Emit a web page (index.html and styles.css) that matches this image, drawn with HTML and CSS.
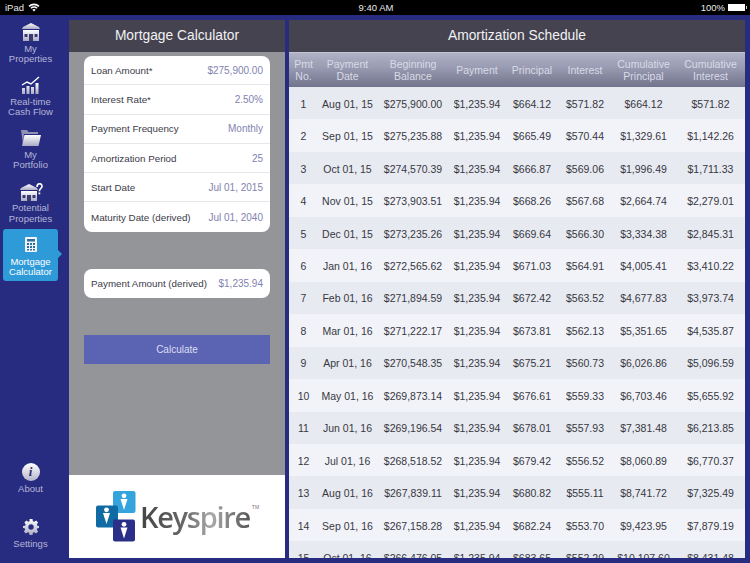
FILE: index.html
```html
<!DOCTYPE html>
<html lang="en">
<head>
    <meta charset="UTF-8">
    <meta name="viewport" content="width=device-width, initial-scale=1.0">
    <title>Mortgage Calculator</title>
    <link rel="stylesheet" href="styles.css">
</head>
<body>
    <div class="statusbar">
        <div class="status-left">
            iPad
            <svg class="wifi" viewBox="0 0 12 9" width="12" height="9">
                <path d="M6 8.6 4.3 6.7a2.5 2.5 0 0 1 3.4 0zM3.4 5.8 2.4 4.7a5.3 5.3 0 0 1 7.2 0L8.6 5.8a3.9 3.9 0 0 0-5.2 0zM1.6 3.9.5 2.8a8 8 0 0 1 11 0l-1.1 1.1a6.5 6.5 0 0 0-8.8 0z" fill="#fff"/>
            </svg>
        </div>
        <div class="status-time">9:40 AM</div>
        <div class="status-right">
            100%
            <span class="battery"></span>
        </div>
    </div>

    <div class="app">
        <!-- Menu lateral -->
        <nav class="sidebar">
            <svg class="gradients" width="0" height="0">
                <defs>
                    <linearGradient id="iconFill" x1="0" y1="0" x2="0" y2="1">
                        <stop offset="0" stop-color="#ffffff"/>
                        <stop offset="1" stop-color="#a9abc4"/>
                    </linearGradient>
                </defs>
            </svg>
            <a class="nav-item">
                <div class="icon-slot">
                    <svg viewBox="0 0 20 18" width="20" height="18">
                        <path d="M10 0 18 4 19 6H1L2 4z" fill="url(#iconFill)"/>
                        <path d="M2 7h16v11H2z" fill="url(#iconFill)"/>
                        <path d="M8 11h4v7H8zM3.5 11h3v3h-3zM13.5 11h3v3h-3z" fill="#3a3c70"/>
                    </svg>
                </div>
                <span>My<br>Properties</span>
            </a>
            <a class="nav-item">
                <div class="icon-slot">
                    <svg viewBox="0 0 20 18" width="20" height="18">
                        <path d="M1 9l5-3 4 2 8-7" fill="none" stroke="#fff" stroke-width="1.4"/>
                        <path d="M1 12h3v6H1zM5.5 10h3v8h-3zM10 11h3v7h-3zM14.5 7h3v11h-3z" fill="url(#iconFill)"/>
                    </svg>
                </div>
                <span>Real-time<br>Cash Flow</span>
            </a>
            <a class="nav-item">
                <div class="icon-slot">
                    <svg viewBox="0 0 21 16" width="21" height="16">
                        <path d="M1 0h6l1.5 2H18v2H4L3 14z" fill="#8e90b4"/>
                        <path d="M4.5 5H21l-2.5 11H2z" fill="url(#iconFill)"/>
                    </svg>
                </div>
                <span>My<br>Portfolio</span>
            </a>
            <a class="nav-item">
                <div class="icon-slot">
                    <svg viewBox="0 0 24 18" width="24" height="18">
                        <path d="M10 1 18 5 19 7H1L2 5z" fill="url(#iconFill)"/>
                        <path d="M2 8h16v10H2z" fill="url(#iconFill)"/>
                        <path d="M8 12h4v6H8zM3.5 12h3v3h-3zM13.5 12h3v3h-3z" fill="#3a3c70"/>
                        <path d="M18 4c0-4.500 5-4 5-.8 0 2.400-2.600 2.300-2.600 5" fill="none" stroke="#fff" stroke-width="1.6"/>
                        <path d="M19.5 9.5h1.800v1.800h-1.800z" fill="#fff"/>
                    </svg>
                </div>
                <span>Potential<br>Properties</span>
            </a>
            <a class="nav-item active">
                <div class="icon-slot">
                    <svg viewBox="0 0 12 15" width="12" height="15">
                        <path d="M1 0h10a1 1 0 0 1 1 1v13a1 1 0 0 1-1 1H1a1 1 0 0 1-1-1V1a1 1 0 0 1 1-1z" fill="#f2f4fa"/>
                        <path d="M2 2h8v2.500H2zM2 6h2v2H2zM5 6h2v2H5zM8 6h2v2H8zM2 9h2v2H2zM5 9h2v2H5zM8 9h2v2H8zM2 12h2v1.500H2zM5 12h2v1.500H5zM8 12h2v1.500H8z" fill="#2e6f9f"/>
                    </svg>
                </div>
                <span>Mortgage<br>Calculator</span>
            </a>
            <a class="nav-item about">
                <div class="icon-slot"><span class="info-icon">i</span></div>
                <span>About</span>
            </a>
            <a class="nav-item settings">
                <div class="icon-slot">
                    <svg viewBox="0 0 16 16" width="16" height="16">
                        <path d="M6.5 0h3l.4 2.200 1.300.6 1.900-1.300 2 2.100-1.300 1.800.6 1.300 2.100.4v1.800l-2.100.4-.6 1.300 1.300 1.800-2 2.100-1.900-1.300-1.300.6-.4 2.200h-3l-.4-2.200-1.300-.6-1.900 1.300-2-2.100 1.300-1.800-.6-1.300L0 8.900V7.100l2.100-.4.6-1.300L1.400 3.600l2-2.100 1.900 1.300 1.300-.6z" fill="url(#iconFill)"/>
                        <circle cx="8" cy="8" r="2.700" fill="#282c80"/>
                    </svg>
                </div>
                <span>Settings</span>
            </a>
        </nav>

        <!-- Calculadora -->
        <section class="calc-panel">
            <div class="panel-title">Mortgage Calculator</div>
            <div class="calc-body">
                <div class="field-group">
                    <div class="field"><span>Loan Amount*</span><span class="value">$275,900.00</span></div>
                    <div class="field"><span>Interest Rate*</span><span class="value">2.50%</span></div>
                    <div class="field"><span>Payment Frequency</span><span class="value">Monthly</span></div>
                    <div class="field"><span>Amortization Period</span><span class="value">25</span></div>
                    <div class="field"><span>Start Date</span><span class="value">Jul 01, 2015</span></div>
                    <div class="field"><span>Maturity Date (derived)</span><span class="value">Jul 01, 2040</span></div>
                </div>
                <div class="field-group">
                    <div class="field"><span>Payment Amount (derived)</span><span class="value">$1,235.94</span></div>
                </div>
                <button class="calc-btn">Calculate</button>
            </div>
            <div class="logo-box">
                <svg class="logo-mark" viewBox="0 0 41 51" width="41" height="51">
                    <rect x="17" y="0" width="22.5" height="22" rx="2" fill="#35a3dc"/>
                    <rect x="0" y="14.5" width="22" height="22" rx="2" fill="#106ba5"/>
                    <rect x="17" y="28.5" width="22" height="22" rx="2" fill="#2b2f88"/>
                    <circle cx="28" cy="4.800" r="2.400" fill="#fff"/>
                    <path d="M24.5 8h7L28 19z" fill="#fff"/>
                    <circle cx="10.5" cy="18.800" r="2.400" fill="#fff"/>
                    <path d="M7 22h7l-3.500 11z" fill="#fff"/>
                    <circle cx="28" cy="33.300" r="2.400" fill="#fff"/>
                    <path d="M24.5 36.500h7L28 47.500z" fill="#fff"/>
                </svg>
                <span class="logo-text">Keyspire</span>
                <span class="logo-tm">TM</span>
            </div>
        </section>

        <!-- Tabela de amortizacao -->
        <section class="schedule-panel">
            <div class="panel-title">Amortization Schedule</div>
            <div class="schedule-head row-cols">
                <div>Pmt<br>No.</div>
                <div>Payment<br>Date</div>
                <div>Beginning<br>Balance</div>
                <div>Payment</div>
                <div>Principal</div>
                <div>Interest</div>
                <div>Cumulative<br>Principal</div>
                <div>Cumulative<br>Interest</div>
            </div>
            <div class="schedule-rows">
                <div class="row row-cols"><div>1</div><div>Aug 01, 15</div><div>$275,900.00</div><div>$1,235.94</div><div>$664.12</div><div>$571.82</div><div>$664.12</div><div>$571.82</div></div>
                <div class="row row-cols"><div>2</div><div>Sep 01, 15</div><div>$275,235.88</div><div>$1,235.94</div><div>$665.49</div><div>$570.44</div><div>$1,329.61</div><div>$1,142.26</div></div>
                <div class="row row-cols"><div>3</div><div>Oct 01, 15</div><div>$274,570.39</div><div>$1,235.94</div><div>$666.87</div><div>$569.06</div><div>$1,996.49</div><div>$1,711.33</div></div>
                <div class="row row-cols"><div>4</div><div>Nov 01, 15</div><div>$273,903.51</div><div>$1,235.94</div><div>$668.26</div><div>$567.68</div><div>$2,664.74</div><div>$2,279.01</div></div>
                <div class="row row-cols"><div>5</div><div>Dec 01, 15</div><div>$273,235.26</div><div>$1,235.94</div><div>$669.64</div><div>$566.30</div><div>$3,334.38</div><div>$2,845.31</div></div>
                <div class="row row-cols"><div>6</div><div>Jan 01, 16</div><div>$272,565.62</div><div>$1,235.94</div><div>$671.03</div><div>$564.91</div><div>$4,005.41</div><div>$3,410.22</div></div>
                <div class="row row-cols"><div>7</div><div>Feb 01, 16</div><div>$271,894.59</div><div>$1,235.94</div><div>$672.42</div><div>$563.52</div><div>$4,677.83</div><div>$3,973.74</div></div>
                <div class="row row-cols"><div>8</div><div>Mar 01, 16</div><div>$271,222.17</div><div>$1,235.94</div><div>$673.81</div><div>$562.13</div><div>$5,351.65</div><div>$4,535.87</div></div>
                <div class="row row-cols"><div>9</div><div>Apr 01, 16</div><div>$270,548.35</div><div>$1,235.94</div><div>$675.21</div><div>$560.73</div><div>$6,026.86</div><div>$5,096.59</div></div>
                <div class="row row-cols"><div>10</div><div>May 01, 16</div><div>$269,873.14</div><div>$1,235.94</div><div>$676.61</div><div>$559.33</div><div>$6,703.46</div><div>$5,655.92</div></div>
                <div class="row row-cols"><div>11</div><div>Jun 01, 16</div><div>$269,196.54</div><div>$1,235.94</div><div>$678.01</div><div>$557.93</div><div>$7,381.48</div><div>$6,213.85</div></div>
                <div class="row row-cols"><div>12</div><div>Jul 01, 16</div><div>$268,518.52</div><div>$1,235.94</div><div>$679.42</div><div>$556.52</div><div>$8,060.89</div><div>$6,770.37</div></div>
                <div class="row row-cols"><div>13</div><div>Aug 01, 16</div><div>$267,839.11</div><div>$1,235.94</div><div>$680.82</div><div>$555.11</div><div>$8,741.72</div><div>$7,325.49</div></div>
                <div class="row row-cols"><div>14</div><div>Sep 01, 16</div><div>$267,158.28</div><div>$1,235.94</div><div>$682.24</div><div>$553.70</div><div>$9,423.95</div><div>$7,879.19</div></div>
                <div class="row row-cols"><div>15</div><div>Oct 01, 16</div><div>$266,476.05</div><div>$1,235.94</div><div>$683.65</div><div>$552.29</div><div>$10,107.60</div><div>$8,431.48</div></div>
            </div>
        </section>
    </div>
</body>
</html>
```

FILE: styles.css
```css
* {
    box-sizing: border-box;
}

html, body {
    height: 100%;
}

body {
    margin: 0;
    background-color: #282c80;
    font-family: "Liberation Sans", Arial, sans-serif;
    display: flex;
    flex-direction: column;
    overflow: hidden;
}

.statusbar {
    height: 15px;
    flex: none;
    background-color: black;
    color: #e8e8e8;
    font-size: 9.5px;
    display: grid;
    grid-template-columns: 1fr auto 1fr;
    align-items: center;
    padding: 0 3px 1px 5px;
}

.status-left {
    display: flex;
    align-items: center;
    gap: 4px;
}

.status-right {
    display: flex;
    align-items: center;
    justify-content: flex-end;
    gap: 3px;
}

.battery {
    width: 17px;
    height: 7px;
    background-color: white;
    position: relative;
    margin-right: 2px;
}

.battery::after {
    content: "";
    position: absolute;
    right: -2px;
    top: 2px;
    width: 1px;
    height: 3px;
    background-color: #ccc;
}

.app {
    flex: 1;
    min-height: 0;
    display: flex;
    padding: 5px 5px 5px 0;
}

.sidebar {
    width: 69px;
    flex: none;
    display: flex;
    flex-direction: column;
    align-items: flex-start;
    padding-left: 3px;
}

.gradients {
    position: absolute;
}

.nav-item {
    width: 55px;
    height: 53.2px;
    flex: none;
    display: flex;
    flex-direction: column;
    align-items: center;
    color: #b4b6d8;
    font-size: 9.5px;
    line-height: 10.5px;
    text-align: center;
    padding-top: 2px;
}

.icon-slot {
    height: 20px;
    flex: none;
    display: flex;
    align-items: center;
    margin-bottom: 1.5px;
}

.nav-item.active {
    background-color: #2e9ad8;
    color: white;
    border-radius: 3px;
    position: relative;
    height: 52px;
    margin-top: -3.8px;
    padding-top: 6px;
}

.nav-item.active .icon-slot {
    margin-bottom: 2px;
}

.nav-item.active::after {
    content: "";
    position: absolute;
    right: -4px;
    top: 21px;
    border-left: 4px solid #2e9ad8;
    border-top: 4px solid transparent;
    border-bottom: 4px solid transparent;
}

.nav-item.about {
    height: 57px;
    margin-top: auto;
}

.nav-item.settings {
    height: 41px;
    padding-top: 0;
}

.info-icon {
    width: 18px;
    height: 18px;
    border-radius: 50%;
    background: linear-gradient(#ffffff, #b3b5cc);
    color: #30325f;
    font-family: "Liberation Serif", serif;
    font-style: italic;
    font-weight: bold;
    font-size: 13px;
    line-height: 18px;
}

.calc-panel {
    width: 216px;
    flex: none;
    margin-right: 4px;
    display: flex;
    flex-direction: column;
    background-color: #939598;
}

.panel-title {
    height: 32px;
    flex: none;
    background-color: #45434f;
    color: #f1f1f4;
    font-size: 13.8px;
    line-height: 31px;
    text-align: center;
}

.calc-body {
    flex: 1;
    display: flex;
    flex-direction: column;
    gap: 37px;
    padding: 4px 15px 0;
}

.field-group {
    background-color: white;
    border-radius: 8px;
    overflow: hidden;
}

.field {
    height: 29.3px;
    display: flex;
    align-items: center;
    justify-content: space-between;
    padding: 0 7px;
    color: #3b3b47;
    font-size: 9.8px;
    border-bottom: 1px solid #e6e6ea;
}

.field:last-child {
    border-bottom: none;
}

.value {
    color: #7f83b1;
    font-size: 10px;
}

.calc-btn {
    height: 29px;
    border: none;
    background-color: #5b63b3;
    color: #dcdff2;
    font-family: inherit;
    font-size: 10px;
}

.logo-box {
    height: 83px;
    flex: none;
    background-color: white;
    display: flex;
    align-items: center;
    padding-left: 27px;
}

.logo-mark {
    flex: none;
    margin-right: 3px;
}

.logo-text {
    font-family: "Open Sans", sans-serif;
    font-size: 29px;
    font-weight: 600;
    letter-spacing: -1.3px;
    background: linear-gradient(90deg, #444, #666 40%, #aaa 65%, #555);
    -webkit-background-clip: text;
    background-clip: text;
    color: transparent;
}

.logo-tm {
    font-size: 5px;
    color: #777;
    align-self: flex-start;
    margin: 29px 0 0 2px;
}

.schedule-panel {
    flex: 1;
    min-width: 0;
    display: flex;
    flex-direction: column;
    overflow: hidden;
}

.row-cols {
    display: grid;
    grid-template-columns: 29px 59px 72px 56px 54px 52px 65px 69px;
    text-align: center;
}

.schedule-head {
    height: 35px;
    flex: none;
    align-items: center;
    background: linear-gradient(#b0b3c6, #9a9db3 40%, #72738c);
    border-top: 1px solid #c3c5d4;
    color: #d9dae6;
    font-size: 10.5px;
    line-height: 12.5px;
}

.schedule-rows {
    flex: 1;
    min-height: 0;
    overflow: hidden;
}

.row {
    height: 32.46px;
    padding-top: 1px;
    align-items: center;
    background-color: #e8eaf1;
    color: #37383f;
    font-size: 10.5px;
}

.row:nth-child(even) {
    background-color: #f2f3f9;
}
```
